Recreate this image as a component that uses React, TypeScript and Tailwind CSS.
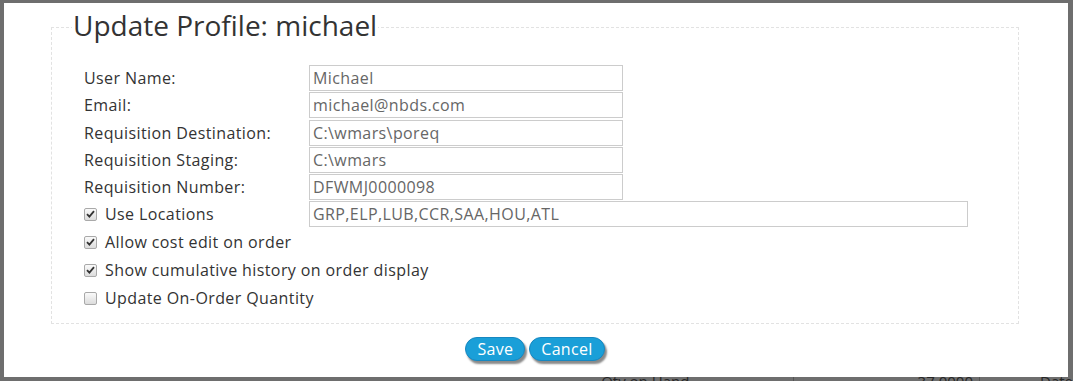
import React from "react"

const font = { fontFamily: '"Open Sans", "Liberation Sans", sans-serif' }

const fields = [
  { label: "User Name:", value: "Michael" },
  { label: "Email:", value: "michael@nbds.com" },
  { label: "Requisition Destination:", value: "C:\\wmars\\poreq" },
  { label: "Requisition Staging:", value: "C:\\wmars" },
  { label: "Requisition Number:", value: "DFWMJ0000098" },
]

const options = [
  { label: "Allow cost edit on order", checked: true },
  { label: "Show cumulative history on order display", checked: true },
  { label: "Update On-Order Quantity", checked: false },
]

function Check({ checked }: { checked: boolean }) {
  return (
    <span className="w-[13px] h-[13px] shrink-0 rounded-[2px] border border-[#a9a9a9] bg-gradient-to-b from-[#fafafa] to-[#dcdcdc] flex items-center justify-center">
      {checked && (
        <svg width="9" height="8" viewBox="0 0 9 8">
          <path d="M1 4.2 L3.4 6.6 L8 1.2" fill="none" stroke="#333" strokeWidth="1.8" />
        </svg>
      )}
    </span>
  )
}

function TextBox({ value, wide }: { value: string; wide?: boolean }) {
  return (
    <div
      className={`${wide ? "w-[659px]" : "w-[314px]"} h-[26px] border border-[#cccccc] px-[3px] flex items-center text-[16px] tracking-[0.4px] text-[#666] whitespace-nowrap`}
    >
      {value}
    </div>
  )
}

export default function App() {
  return (
    <div className="relative w-[1073px] h-[381px] bg-[#6e6e6e] overflow-hidden" style={font}>
      {/* page under the overlay */}
      <div className="pt-[370px] flex text-[15px] text-[#262626]">
        <div className="w-[603px]" />
        <div className="w-[193px] border-r border-[#555]">Qty on Hand</div>
        <div className="w-[187px] border-r border-[#555] text-right pr-[6px]">37.0000</div>
        <div className="pl-[60px]">Date</div>
      </div>

      <div className="absolute left-[4px] top-[3px] w-[1064px] h-[374px] bg-white">
        <fieldset className="ml-[47px] mt-[7px] w-[968px] h-[314px] border border-dashed border-[#e2e2e2] pl-[32px] pr-[8px]">
          <legend className="-ml-[12px] px-[1px] pb-[4px] text-[28px] leading-[30px] text-[#333]">
            Update Profile: michael
          </legend>

          <div className="mt-[21px] flex flex-col gap-[1.3px] text-[16px] tracking-[0.4px] text-[#333]">
            {fields.map((f) => (
              <div key={f.label} className="flex items-center">
                <div className="w-[225px]">{f.label}</div>
                <TextBox value={f.value} />
              </div>
            ))}
            <div className="flex items-center">
              <div className="w-[225px] flex items-center gap-[8px]">
                <Check checked />
                <span>Use Locations</span>
              </div>
              <TextBox value="GRP,ELP,LUB,CCR,SAA,HOU,ATL" wide />
            </div>
          </div>

          <div className="mt-[1px] flex flex-col text-[16px] tracking-[0.4px] text-[#333]">
            {options.map((o) => (
              <div key={o.label} className="h-[28px] flex items-center gap-[8px]">
                <Check checked={o.checked} />
                <span>{o.label}</span>
              </div>
            ))}
          </div>
        </fieldset>

        <div className="mt-[13px] flex justify-center gap-[4px] pr-[2px]">
          <button className="h-[24px] px-[11px] rounded-full bg-[#1a9fd8] border border-[#1787c0] text-white text-[16px] tracking-[0.3px] leading-none shadow-[2px_3px_2px_#8a8a8a]">
            Save
          </button>
          <button className="h-[24px] px-[11px] rounded-full bg-[#1a9fd8] border border-[#1787c0] text-white text-[16px] tracking-[0.3px] leading-none shadow-[2px_3px_2px_#8a8a8a]">
            Cancel
          </button>
        </div>
      </div>
    </div>
  )
}
